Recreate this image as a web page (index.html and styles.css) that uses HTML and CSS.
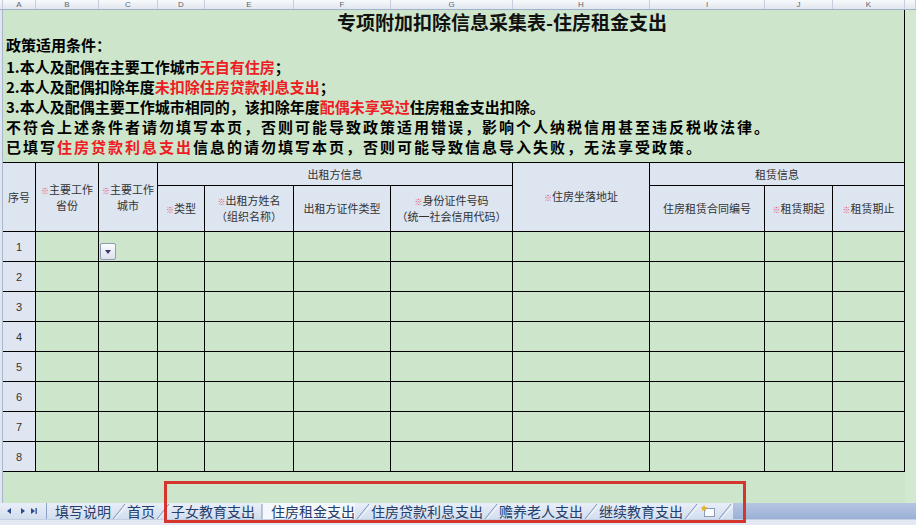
FILE: index.html
```html
<!DOCTYPE html>
<html lang="zh-CN">
<head>
<meta charset="utf-8">
<title>专项附加扣除信息采集表-住房租金支出</title>
<link rel="stylesheet" href="styles.css">
</head>
<body>
<div class="app">
  <div class="colhdr">
    <div class="ch"></div>
    <div class="ch">A</div><div class="ch">B</div><div class="ch">C</div><div class="ch">D</div>
    <div class="ch">E</div><div class="ch">F</div><div class="ch">G</div><div class="ch">H</div>
    <div class="ch">I</div><div class="ch">J</div><div class="ch">K</div><div class="ch"></div>
  </div>

  <div class="sheet">
    <div class="rowhdr"></div>
    <div class="main">
      <div class="intro">
        <div class="title">专项附加扣除信息采集表-住房租金支出</div>
        <div class="ph">政策适用条件：</div>
        <div class="pl">1.本人及配偶在主要工作城市<span class="red">无自有住房</span>；</div>
        <div class="pl">2.本人及配偶扣除年度<span class="red">未扣除住房贷款利息支出</span>；</div>
        <div class="pl">3.本人及配偶主要工作城市相同的，该扣除年度<span class="red">配偶未享受过</span>住房租金支出扣除。</div>
        <div class="pl wide">不符合上述条件者请勿填写本页，否则可能导致政策适用错误，影响个人纳税信用甚至违反税收法律。</div>
        <div class="pl wide">已填写<span class="red">住房贷款利息支出</span>信息的请勿填写本页，否则可能导致信息导入失败，无法享受政策。</div>
      </div>

      <div class="tbl">
        <div class="c h rs2">序号</div>
        <div class="c h rs2 two"><span><i class="m">※</i>主要工作</span><span>省份</span></div>
        <div class="c h rs2 two"><span><i class="m">※</i>主要工作</span><span>城市</span></div>
        <div class="c h cs4">出租方信息</div>
        <div class="c h rs2"><span><i class="m">※</i>住房坐落地址</span></div>
        <div class="c h cs3">租赁信息</div>

        <div class="c h"><span><i class="m">※</i>类型</span></div>
        <div class="c h two"><span><i class="m">※</i>出租方姓名</span><span>（组织名称）</span></div>
        <div class="c h">出租方证件类型</div>
        <div class="c h two"><span><i class="m">※</i>身份证件号码</span><span>（统一社会信用代码）</span></div>
        <div class="c h">住房租赁合同编号</div>
        <div class="c h"><span><i class="m">※</i>租赁期起</span></div>
        <div class="c h"><span><i class="m">※</i>租赁期止</span></div>

        <div class="c n">1</div><div class="c"></div><div class="c dd-cell"><span class="dd"></span></div><div class="c"></div><div class="c"></div><div class="c"></div><div class="c"></div><div class="c"></div><div class="c"></div><div class="c"></div><div class="c"></div>
        <div class="c n">2</div><div class="c"></div><div class="c"></div><div class="c"></div><div class="c"></div><div class="c"></div><div class="c"></div><div class="c"></div><div class="c"></div><div class="c"></div><div class="c"></div>
        <div class="c n">3</div><div class="c"></div><div class="c"></div><div class="c"></div><div class="c"></div><div class="c"></div><div class="c"></div><div class="c"></div><div class="c"></div><div class="c"></div><div class="c"></div>
        <div class="c n">4</div><div class="c"></div><div class="c"></div><div class="c"></div><div class="c"></div><div class="c"></div><div class="c"></div><div class="c"></div><div class="c"></div><div class="c"></div><div class="c"></div>
        <div class="c n">5</div><div class="c"></div><div class="c"></div><div class="c"></div><div class="c"></div><div class="c"></div><div class="c"></div><div class="c"></div><div class="c"></div><div class="c"></div><div class="c"></div>
        <div class="c n">6</div><div class="c"></div><div class="c"></div><div class="c"></div><div class="c"></div><div class="c"></div><div class="c"></div><div class="c"></div><div class="c"></div><div class="c"></div><div class="c"></div>
        <div class="c n">7</div><div class="c"></div><div class="c"></div><div class="c"></div><div class="c"></div><div class="c"></div><div class="c"></div><div class="c"></div><div class="c"></div><div class="c"></div><div class="c"></div>
        <div class="c n">8</div><div class="c"></div><div class="c"></div><div class="c"></div><div class="c"></div><div class="c"></div><div class="c"></div><div class="c"></div><div class="c"></div><div class="c"></div><div class="c"></div>
      </div>
      <div class="filler"></div>
    </div>
    <div class="rstrip"></div>
  </div>

  <div class="tabbar">
    <div class="nav">
      <svg width="38" height="10" viewBox="0 0 38 10">
        <path d="M10 2 L6 5 L10 8 Z" fill="#2a4b8d"/>
        <path d="M20 2 L24 5 L20 8 Z" fill="#2a4b8d"/>
        <path d="M30 2 L34 5 L30 8 Z" fill="#2a4b8d"/>
        <rect x="34.5" y="2" width="1.3" height="6" fill="#2a4b8d"/>
      </svg>
    </div>
    <div class="tab first">填写说明</div>
    <div class="sep"><svg width="16" height="16" viewBox="0 0 16 16"><path d="M2 16 L14 1" stroke="#8096bd" stroke-width="1" fill="none"/><path d="M4 16 L16 2" stroke="#f5f8fc" stroke-width="1" fill="none"/></svg></div>
    <div class="tab">首页</div>
    <div class="sep"><svg width="16" height="16" viewBox="0 0 16 16"><path d="M2 16 L14 1" stroke="#8096bd" stroke-width="1" fill="none"/><path d="M4 16 L16 2" stroke="#f5f8fc" stroke-width="1" fill="none"/></svg></div>
    <div class="tab">子女教育支出</div>
    <div class="sep on-edge"><svg width="16" height="16" viewBox="0 0 16 16"><path d="M7 16 L7 1" stroke="#8096bd" stroke-width="1" fill="none"/></svg></div>
    <div class="tab on">住房租金支出</div>
    <div class="sep"><svg width="16" height="16" viewBox="0 0 16 16"><path d="M2 16 L14 1" stroke="#8096bd" stroke-width="1" fill="none"/><path d="M4 16 L16 2" stroke="#f5f8fc" stroke-width="1" fill="none"/></svg></div>
    <div class="tab">住房贷款利息支出</div>
    <div class="sep"><svg width="16" height="16" viewBox="0 0 16 16"><path d="M2 16 L14 1" stroke="#8096bd" stroke-width="1" fill="none"/><path d="M4 16 L16 2" stroke="#f5f8fc" stroke-width="1" fill="none"/></svg></div>
    <div class="tab">赡养老人支出</div>
    <div class="sep"><svg width="16" height="16" viewBox="0 0 16 16"><path d="M2 16 L14 1" stroke="#8096bd" stroke-width="1" fill="none"/><path d="M4 16 L16 2" stroke="#f5f8fc" stroke-width="1" fill="none"/></svg></div>
    <div class="tab">继续教育支出</div>
    <div class="sep"><svg width="16" height="16" viewBox="0 0 16 16"><path d="M2 16 L14 1" stroke="#8096bd" stroke-width="1" fill="none"/><path d="M4 16 L16 2" stroke="#f5f8fc" stroke-width="1" fill="none"/></svg></div>
    <div class="newtab">
      <svg width="18" height="14" viewBox="0 0 18 14">
        <rect x="5.5" y="4.5" width="10" height="8" fill="#fbfcfe" stroke="#8c9cb8"/>
        <path d="M5 0.5 L6 3 L8.5 3.2 L6.6 4.8 L7.3 7.3 L5 5.9 L2.7 7.3 L3.4 4.8 L1.5 3.2 L4 3 Z" fill="#e6b422"/>
      </svg>
    </div>
    <div class="sep"><svg width="16" height="16" viewBox="0 0 16 16"><path d="M2 16 L14 1" stroke="#8096bd" stroke-width="1" fill="none"/><path d="M4 16 L16 2" stroke="#f5f8fc" stroke-width="1" fill="none"/></svg></div>
    <div class="rest"></div>
  </div>
  <div class="status"></div>

  <div class="annot"></div>
</div>
</body>
</html>
```

FILE: styles.css
```css
html, body {
  margin: 0;
  padding: 0;
}

body {
  width: 916px;
  height: 525px;
  overflow: hidden;
  background: #cde6cb;
  font-family: "Noto Sans CJK SC", "Noto Sans", sans-serif;
}

.app {
  position: relative;
  width: 916px;
  height: 525px;
  display: flex;
  flex-direction: column;
}

/* column letters */
.colhdr {
  display: grid;
  grid-template-columns: 3px 33px 63px 59px 47px 89px 97px 122px 137px 115px 68px 72px 1fr;
  height: 10px;
  box-sizing: border-box;
  border-bottom: 1px solid #9fb2c9;
  background: linear-gradient(#f7f9fc, #e1e7ef);
}

.ch {
  box-sizing: border-box;
  border-right: 1px solid #c6cfdb;
  font: 8px/9px "Liberation Sans", sans-serif;
  color: #5c6472;
  text-align: center;
}

/* sheet body */
.sheet {
  display: flex;
  height: 493px;
}

.rowhdr {
  width: 3px;
  box-sizing: border-box;
  background: #dfe6ef;
  border-right: 1px solid #a9b8cc;
}

.main {
  width: 902px;
  display: flex;
  flex-direction: column;
}

.rstrip {
  flex: 1;
  background: #d3e8d0;
}

.intro {
  height: 152px;
  box-sizing: border-box;
  border-right: 1px solid #000;
  padding-left: 3px;
  color: #000;
}

.title {
  font-size: 19px;
  font-weight: 700;
  line-height: 23px;
  text-align: center;
  padding-left: 94px;
  color: #111;
}

.ph {
  margin: 2px 0 2px;
  font-size: 15px;
  font-weight: 700;
  line-height: 20px;
}

.pl {
  font-size: 15px;
  font-weight: 700;
  line-height: 20px;
  white-space: nowrap;
}

.pl.wide {
  letter-spacing: 2px;
}

.red {
  color: #ee1c25;
}

/* table grid */
.tbl {
  display: grid;
  grid-template-columns: 33px 63px 59px 47px 89px 97px 122px 137px 115px 68px 72px;
  grid-template-rows: 23px 46px repeat(8, 30px);
  border-top: 1px solid #000;
}

.c {
  box-sizing: border-box;
  border-right: 1px solid #000;
  border-bottom: 1px solid #000;
  background: #cde6cb;
}

.h {
  background: #dde5f1;
  display: flex;
  flex-direction: column;
  align-items: center;
  justify-content: center;
  text-align: center;
  font-size: 11px;
  line-height: 13px;
  color: #333;
  white-space: nowrap;
}

.h.two {
  line-height: 15px;
}

.rs2 {
  grid-row: span 2;
}

.cs4 {
  grid-column: span 4;
}

.cs3 {
  grid-column: span 3;
}

.m {
  font-style: normal;
  color: #e2576a;
  font-size: 8px;
}

.n {
  background: #dfe6f1;
  display: flex;
  align-items: center;
  justify-content: center;
  font: 11px "Liberation Sans", sans-serif;
  color: #333;
}

.dd-cell {
  position: relative;
}

.dd {
  position: absolute;
  left: 1px;
  top: 11px;
  width: 16px;
  height: 17px;
  box-sizing: border-box;
  border: 1px solid #8e9cb3;
  border-radius: 2px;
  background: linear-gradient(#fbfcfe, #dbe1ec);
  display: flex;
  align-items: center;
  justify-content: center;
}

.dd::after {
  content: "";
  border-left: 3.5px solid transparent;
  border-right: 3.5px solid transparent;
  border-top: 4px solid #3d3470;
}

.filler {
  height: 31px;
}

/* sheet tabs */
.tabbar {
  height: 16px;
  display: flex;
  background: linear-gradient(#e9eff8, #d2ddee);
  font-size: 14px;
  line-height: 16px;
  color: #243d6b;
  white-space: nowrap;
}

.nav {
  width: 47px;
  box-sizing: border-box;
  border-right: 1px solid #8da2c4;
  display: flex;
  align-items: center;
  padding-left: 1px;
}

.tab.first {
  margin-left: 8px;
}

.tab.on {
  background: #f4f7fb;
}

.sep {
  width: 16px;
  display: flex;
}

.sep.on-edge {
  background: linear-gradient(90deg, transparent 0 7px, #f4f7fb 7px);
}

.newtab {
  width: 18px;
  display: flex;
  align-items: center;
}

.rest {
  flex: 1;
  background: linear-gradient(#b5c6e3, #9bb0d6);
}

.status {
  height: 6px;
  box-sizing: border-box;
  background: #e3e9f3;
  border-top: 1px solid #c3d0e4;
}

/* red annotation box */
.annot {
  position: absolute;
  left: 164px;
  top: 481px;
  width: 582px;
  height: 42px;
  box-sizing: border-box;
  border: 3px solid #d4352c;
  pointer-events: none;
}
```
